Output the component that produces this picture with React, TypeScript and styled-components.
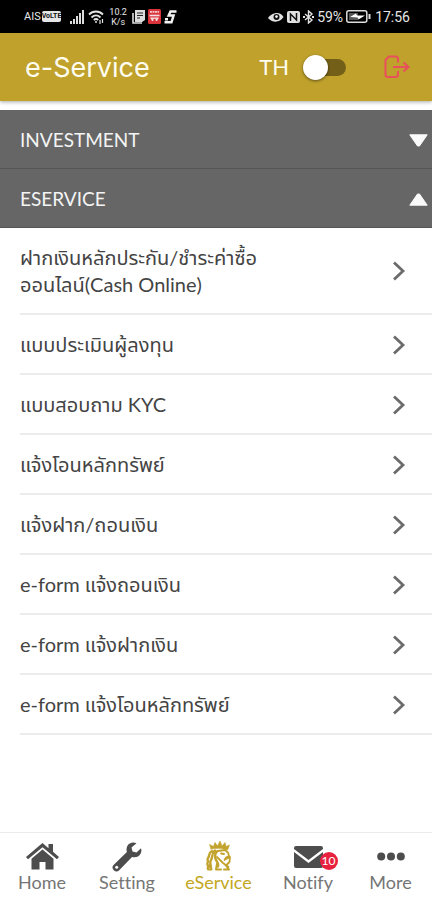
import React, { useState } from "react";
import styled, { createGlobalStyle } from "styled-components";

const GlobalStyle = createGlobalStyle`
  * { box-sizing: border-box; }
  body { margin: 0; background: #fff; }
  button, input { font: inherit; color: inherit; }
`;

const gold = "#bfa12c";

const Screen = styled.div`
  display: flex;
  flex-direction: column;
  min-height: 100vh;
  font-family: Lato, "Noto Sans Thai", "Noto Sans", sans-serif;
  font-variant-ligatures: none;
  color: #444;
`;

const StatusBar = styled.div`
  display: flex;
  align-items: center;
  justify-content: space-between;
  height: 33px;
  padding: 0 22px 0 24px;
  background: #000;
  color: #e6e6e6;
  font-family: Roboto, sans-serif;
  font-size: 14px;
`;

const StatusGroup = styled.div<{ $gap: number }>`
  display: flex;
  align-items: center;
  gap: ${(p) => p.$gap}px;
`;

const Carrier = styled.span`
  font-size: 11px;
`;

const Volte = styled.span`
  margin-right: 6px;
  border-radius: 2px;
  background: #e6e6e6;
  color: #111;
  font-size: 7px;
  font-weight: 700;
  line-height: 11px;
`;

const Speed = styled.span`
  margin: 0 2px;
  font-size: 9px;
  line-height: 10px;
  text-align: center;
`;

const Clock = styled.span`
  margin-left: 1px;
`;

const Header = styled.header`
  display: flex;
  align-items: center;
  height: 68px;
  padding: 0 22px 0 25px;
  background: ${gold};
  color: #fffdf0;
  box-shadow: 0 1px 4px rgba(0, 0, 0, 0.35);
`;

const Title = styled.h1`
  flex: 1;
  margin: 0;
  padding-top: 2px;
  font-family: Inter, sans-serif;
  font-size: 27px;
  font-weight: 400;
  line-height: 32px;
`;

const Language = styled.label`
  display: flex;
  align-items: center;
  gap: 14px;
  font-size: 22px;
  line-height: 32px;
`;

const Switch = styled.input`
  appearance: none;
  display: flex;
  align-items: center;
  width: 43px;
  height: 17px;
  margin: 0;
  border-radius: 9px;
  background: linear-gradient(#735f17, #735f17) right / 36px 17px no-repeat;
  &::before {
    content: "";
    width: 25px;
    height: 25px;
    flex: none;
    border-radius: 50%;
    background: #fff;
    box-shadow: 0 1px 3px rgba(0, 0, 0, 0.5);
  }
  &:checked { justify-content: flex-end; }
`;

const IconButton = styled.button`
  display: flex;
  margin-left: 38px;
  padding: 0;
  border: 0;
  background: none;
  color: #e8505b;
`;

const Main = styled.main`
  flex: 1;
  padding-top: 9px;
`;

const SectionButton = styled.button`
  display: flex;
  align-items: center;
  justify-content: space-between;
  width: 100%;
  height: 59px;
  padding: 2px 4px 0 20px;
  border: 0;
  border-bottom: 1px solid #555;
  background: #666;
  color: #f4f4f4;
  font-size: 19px;
  line-height: 24px;
  text-align: left;
`;

const List = styled.ul`
  margin: 0;
  padding: 0 0 0 20px;
  list-style: none;
`;

const Row = styled.li`
  border-bottom: 2px solid #ececec;
`;

const RowLink = styled.a`
  display: flex;
  align-items: center;
  justify-content: space-between;
  padding: 16px 26px 15px 0;
  color: inherit;
  font-size: 20px;
  line-height: 27px;
  text-decoration: none;
  svg { flex: none; }
`;

const RowText = styled.span`
  max-width: 300px;
`;

const Nav = styled.nav`
  display: grid;
  grid-template-columns: 84fr 86fr 97fr 82fr 83fr;
  height: 68px;
  border-top: 1px solid #ececec;
`;

const NavLink = styled.a<{ $active?: boolean }>`
  display: flex;
  flex-direction: column;
  align-items: center;
  padding-top: 8px;
  color: ${(p) => (p.$active ? "#c2a722" : "#757575")};
  font-size: 18px;
  line-height: 20px;
  text-decoration: none;
`;

const IconSlot = styled.span`
  display: flex;
  position: relative;
  align-items: center;
  justify-content: center;
  height: 31px;
  color: #4d4d4d;
`;

const Badge = styled.span`
  position: absolute;
  top: 11px;
  right: -15px;
  min-width: 18px;
  height: 18px;
  border-radius: 9px;
  background: #e8213f;
  color: #fff;
  font-size: 12px;
  line-height: 18px;
  text-align: center;
`;

const Signal = () => (
  <svg width="15" height="14" viewBox="0 0 15 14" fill="#ddd">
    <path d="M0 11h2v3H0zM3 9h2v5H3zM6 6h2v8H6zM9 3h2v11H9zM12 0h2v14h-2z" />
  </svg>
);

const Wifi = () => (
  <svg width="16" height="14" viewBox="0 0 16 14" fill="none" stroke="#e2e2e2" strokeWidth="1.8">
    <path d="M1 4.5c4-4 10-4 14 0M3.5 7.5c3-2.8 6-2.8 9 0M5.8 10c1.5-1.3 3-1.3 4.4 0" />
    <circle cx="8" cy="12" r="1" fill="#e2e2e2" stroke="none" />
    <path d="M12 10v4M14.5 9v4" strokeWidth="1.2" />
  </svg>
);

const Note = () => (
  <svg width="13" height="14" viewBox="0 0 13 14">
    <path d="M3 0h10v10l-3 2H3z" fill="#ddd" />
    <path d="M1 3v10h9" fill="none" stroke="#ddd" strokeWidth="1.6" />
    <path d="M5 3h6M5 5.5h6M5 8h3" stroke="#222" />
  </svg>
);

const RedApp = () => (
  <svg width="13" height="15" viewBox="0 0 13 15">
    <rect width="13" height="15" rx="1.5" fill="#d9333b" />
    <path d="M2 2.8h9" stroke="#f5c9c9" strokeWidth="1.8" strokeDasharray="2 .5" />
    <path d="M1.5 6.5h10" stroke="#f5dede" strokeWidth="1.6" />
    <path d="M2 8.5h9l-2 3.5H4z" fill="#f5dede" />
    <circle cx="6.5" cy="11" r="1.3" fill="#d9333b" />
  </svg>
);

const SApp = () => (
  <svg width="13" height="14" viewBox="0 0 13 14" fill="none" stroke="#f2f2f2" strokeWidth="2.4">
    <path d="M12.5 1.5H6.5L4.6 5.5H9.6L7.5 12.2H0.5M1 9.2H4" />
  </svg>
);

const Eye = () => (
  <svg width="16" height="12" viewBox="0 0 16 12">
    <path d="M0 7C3 2 12-1 15.5 6 12 12 4 12 0 7z" fill="#e2e2e2" />
    <circle cx="8.5" cy="6" r="3" fill="#111" />
    <circle cx="8.5" cy="5.6" r="1.3" fill="#fff" />
  </svg>
);

const Nfc = () => (
  <svg width="13" height="12" viewBox="0 0 13 12">
    <rect width="13" height="12" rx="2" fill="#e2e2e2" />
    <path d="M3.5 10V3l6 6V2" fill="none" stroke="#111" strokeWidth="1.5" />
  </svg>
);

const Bluetooth = () => (
  <svg width="11" height="14" viewBox="0 0 11 14" fill="none" stroke="#e2e2e2" strokeWidth="1.4">
    <path d="M2 4l7 6-3.5 3V1L9 4 2 10" />
    <path d="M0 7h2M9 7h2" strokeWidth="2" />
  </svg>
);

const Battery = () => (
  <svg width="25" height="13" viewBox="0 0 25 13">
    <rect x=".8" y=".8" width="20" height="11.4" rx="2" fill="none" stroke="#ddd" strokeWidth="1.5" />
    <path d="M3 3h9v7H3z" fill="#555" />
    <path d="M4 7l6-3.5 1 2h8L12.5 9.5l-1-2z" fill="#fff" />
    <path d="M23.5 4v5" stroke="#ddd" strokeWidth="2" />
  </svg>
);

const Logout = () => (
  <svg width="26" height="24" viewBox="0 0 26 24" fill="none" stroke="currentColor" strokeWidth="2">
    <path d="M14 7.5V4a2.5 2.5 0 0 0-2.5-2.5H5L1.5 5v14.5A2.5 2.5 0 0 0 4 22h7.5a2.5 2.5 0 0 0 2.5-2.5V16" />
    <path d="M9 12h15M19.5 7.5L24.5 12l-5 4.5" />
  </svg>
);

const Caret = ({ up }: { up: boolean }) => (
  <svg width="19" height="13" viewBox="0 0 19 13" fill="#fafafa" stroke="#fafafa" strokeLinejoin="round">
    <path d={up ? "M.8 12.2L8.5 1h2l7.7 11.2z" : "M.8 .8L8.5 12h2L18.2.8z"} />
  </svg>
);

const Chevron = () => (
  <svg width="14" height="20" viewBox="0 0 14 20" fill="none" stroke="#6b6b6b" strokeWidth="2.8">
    <path d="M2 1.5L11 10 2 18.5" />
  </svg>
);

const Home = () => (
  <svg width="33" height="27" viewBox="0 0 33 27" fill="currentColor">
    <path d="M16.5 0L0 14l2 2.2L16.5 4.2 31 16.2 33 14l-6-5.2V1h-4.5v4.3z" />
    <path d="M16.5 6.5L5.5 15.7V26.5h8V19h6v7.5h8V15.7z" />
  </svg>
);

const Wrench = () => (
  <svg width="30" height="30" viewBox="0 0 30 30">
    <path
      d="M24.5 1.2C21-.3 16.8.9 15.2 4.2c-.9 2-.9 4-.3 5.8L1.8 22.8a3.8 3.8 0 0 0 5.4 5.4L20 15c3.5 1 7-.2 8.6-3.2 1-1.9 1-3.8.4-5.6l-4.5 4.3-4-.9-1-4z"
      fill="currentColor"
    />
    <circle cx="4.7" cy="25.3" r="1.5" fill="#fff" />
  </svg>
);

const Lion = () => (
  <svg width="28" height="31" viewBox="0 0 28 31" fill="none" stroke="#c2a32e" strokeLinecap="round" strokeLinejoin="round">
    <path d="M6 8L4.5 3.5l4 2L10 1.5l2.5 3.5L15 0l2 5 3-3.5L21 5.5l3.500-1.500-2 5C17 7 11 7 6 8z" fill="#c2a32e" strokeWidth=".6" />
    <path d="M7 10C3 12 5 15 3 17c-1.500 2 1 3-.5 5-.8 1.500 1 2.500.5 4M10 9.500C6 13 8 16 6 19c-1.500 2 0 4-1 7M12.500 10c-3 3-3 6-1.500 9 1 2 3 3 2 6.500" strokeWidth="2.4" />
    <path d="M13 10l7-1 3 2.500 1 3.500-3 1.500-1.500 2.500M16 12.500l3 .5M12 16l6 6 5.500 4M21 18l4-2-.5 5-2.500 2.500" strokeWidth="1.8" />
    <path d="M2.500 27.500l3-4 1 5H3M12 23l-1 5.500h5M20.500 24l3.500 4.500h-5" strokeWidth="2" />
  </svg>
);

const Mail = () => (
  <svg width="29" height="22" viewBox="0 0 29 22" fill="currentColor">
    <path d="M2 0h25a2 2 0 0 1 2 2v1L14.5 14 0 3V2a2 2 0 0 1 2-2z" />
    <path d="M0 6l14.5 11L29 6v14a2 2 0 0 1-2 2H2a2 2 0 0 1-2-2z" />
  </svg>
);

const Dots = () => (
  <svg width="28" height="9" viewBox="0 0 28 9" fill="currentColor">
    <circle cx="4.2" cy="4.5" r="4" />
    <circle cx="14" cy="4.5" r="4" />
    <circle cx="23.8" cy="4.5" r="4" />
  </svg>
);

const services: React.ReactNode[] = [
  <>ฝากเงินหลักประกัน/ชำระค่าซื้อ<br />ออนไลน์(Cash Online)</>,
  "แบบประเมินผู้ลงทุน",
  "แบบสอบถาม KYC",
  "แจ้งโอนหลักทรัพย์",
  "แจ้งฝาก/ถอนเงิน",
  "e-form แจ้งถอนเงิน",
  "e-form แจ้งฝากเงิน",
  "e-form แจ้งโอนหลักทรัพย์",
];

const tabs = [
  { label: "Home", icon: <Home /> },
  { label: "Setting", icon: <Wrench /> },
  { label: "eService", icon: <Lion />, active: true },
  { label: "Notify", icon: <Mail />, badge: 10 },
  { label: "More", icon: <Dots /> },
];

export default function App() {
  const [investmentOpen, setInvestmentOpen] = useState(false);
  const [serviceOpen, setServiceOpen] = useState(true);
  return (
    <Screen>
      <GlobalStyle />
      <StatusBar>
        <StatusGroup $gap={3}>
          <StatusGroup $gap={1}>
            <Carrier>AIS</Carrier>
            <Volte>VoLTE</Volte>
          </StatusGroup>
          <Signal />
          <Wifi />
          <Speed>10.2<br />K/s</Speed>
          <Note />
          <RedApp />
          <SApp />
        </StatusGroup>
        <StatusGroup $gap={3}>
          <Eye />
          <Nfc />
          <Bluetooth />
          <span>59%</span>
          <Battery />
          <Clock>17:56</Clock>
        </StatusGroup>
      </StatusBar>
      <Header>
        <Title>e-Service</Title>
        <Language>
          TH
          <Switch type="checkbox" role="switch" />
        </Language>
        <IconButton type="button" aria-label="Log out"><Logout /></IconButton>
      </Header>
      <Main>
        <SectionButton type="button" aria-expanded={investmentOpen} onClick={() => setInvestmentOpen(!investmentOpen)}>
          INVESTMENT
          <Caret up={investmentOpen} />
        </SectionButton>
        <SectionButton type="button" aria-expanded={serviceOpen} onClick={() => setServiceOpen(!serviceOpen)}>
          ESERVICE
          <Caret up={serviceOpen} />
        </SectionButton>
        {serviceOpen && (
          <List>
            {services.map((service, i) => (
              <Row key={i}>
                <RowLink href="#">
                  <RowText>{service}</RowText>
                  <Chevron />
                </RowLink>
              </Row>
            ))}
          </List>
        )}
      </Main>
      <Nav>
        {tabs.map((tab) => (
          <NavLink key={tab.label} href="#" $active={tab.active}>
            <IconSlot>
              {tab.icon}
              {tab.badge && <Badge>{tab.badge}</Badge>}
            </IconSlot>
            {tab.label}
          </NavLink>
        ))}
      </Nav>
    </Screen>
  );
}
